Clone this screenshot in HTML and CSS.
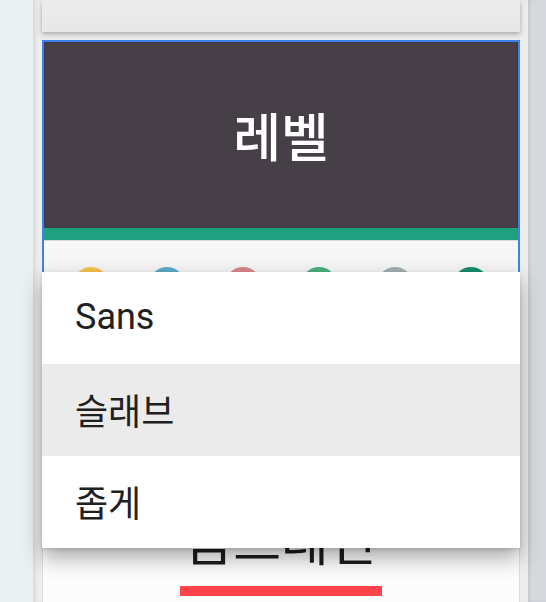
FILE: index.html
```html
<!DOCTYPE html>
<html lang="ko">
<head>
    <meta charset="UTF-8">
    <meta name="viewport" content="width=device-width,initial-scale=1.0">
    <title>레벨</title>
    <link rel="stylesheet" href="styles.css">
</head>
<body>
    <div class="side"></div>
    <div class="panel">
        <div class="card card-top"></div>
        <div class="card card-selected">
            <div class="head">레벨</div>
            <div class="accent"></div>
            <div class="swatches">
                <span class="dot" style="background:#f4c150"></span>
                <span class="dot" style="background:#5ea9c8"></span>
                <span class="dot" style="background:#d98686"></span>
                <span class="dot" style="background:#4caf7c"></span>
                <span class="dot" style="background:#a2aeb4"></span>
                <span class="dot" style="background:#188f6c"></span>
            </div>
        </div>
        <div class="card card-next">
            <div class="next-title">음드레인</div>
            <div class="underline"></div>
        </div>
        <ul class="menu">
            <li class="menu-item">Sans</li>
            <li class="menu-item active">슬래브</li>
            <li class="menu-item">좁게</li>
        </ul>
    </div>
    <div class="rail"></div>
</body>
</html>
```

FILE: styles.css
```css
html, body { margin: 0; padding: 0; }
body {
    width: 546px;
    height: 602px;
    overflow: hidden;
    display: flex;
    font-family: Roboto, "Noto Sans CJK KR", sans-serif;
    background: #ebf0f0;
}
.side { width: 33px; flex: none; background: #ebf0f0; }
.rail { flex: 1; background: #d5d9dd; box-shadow: inset 3px 0 4px -2px rgba(0,0,0,.12); }

.panel {
    position: relative;
    width: 478px;
    flex: none;
    padding: 0 8px;
    border-left: 1px solid #d9dcdc;
    background: #ededed;
    box-shadow: inset 3px 0 4px -2px rgba(0,0,0,.1);
    display: flex;
    flex-direction: column;
    gap: 8px;
}

.card { background: #fafafa; }
.card-top {
    height: 32px;
    flex: none;
    background: linear-gradient(#ececec, #e7e7e7);
    box-shadow: 0 2px 5px rgba(0,0,0,.3);
}
.card-selected {
    flex: none;
    border: 2px solid #3d80f0;
}
.head {
    height: 186px;
    background: #463f47;
    box-shadow: inset 0 0 0 1px #3f3940;
    color: #fff;
    font-size: 52px;
    font-weight: 500;
    display: flex;
    align-items: center;
    justify-content: center;
    padding-bottom: 2px;
    box-sizing: border-box;
}
.accent { height: 12px; background: #20a07f; }
.swatches {
    border-top: 1px solid #d9d9d9;
    background: linear-gradient(#f8f8f8, #ebebeb);
    display: grid;
    grid-template-columns: repeat(6, 76px);
    justify-content: center;
    justify-items: center;
    padding: 26px 0 20px;
}
.dot { width: 36px; height: 36px; border-radius: 50%; }

.card-next {
    flex: 1;
    border: 1px solid #dcdcdc;
    border-bottom: none;
    background: #fcfcfc;
    display: flex;
    flex-direction: column;
    align-items: center;
    padding-top: 180px;
}
.next-title { font-size: 52px; color: #1c1c1c; line-height: 60px; }
.underline { width: 202px; height: 10px; background: #ff454b; margin-top: 12px; }

.menu {
    position: absolute;
    top: 272px;
    left: 8px;
    width: 478px;
    margin: 0;
    padding: 0;
    list-style: none;
    background: #fff;
    box-shadow: 0 10px 20px rgba(0,0,0,.32), 0 2px 4px rgba(0,0,0,.12);
}
.menu-item {
    height: 92px;
    display: flex;
    align-items: center;
    padding-left: 33px;
    padding-bottom: 2px;
    box-sizing: border-box;
    font-size: 36px;
    color: #202020;
}
.menu-item.active { background: #ebebeb; }
```
